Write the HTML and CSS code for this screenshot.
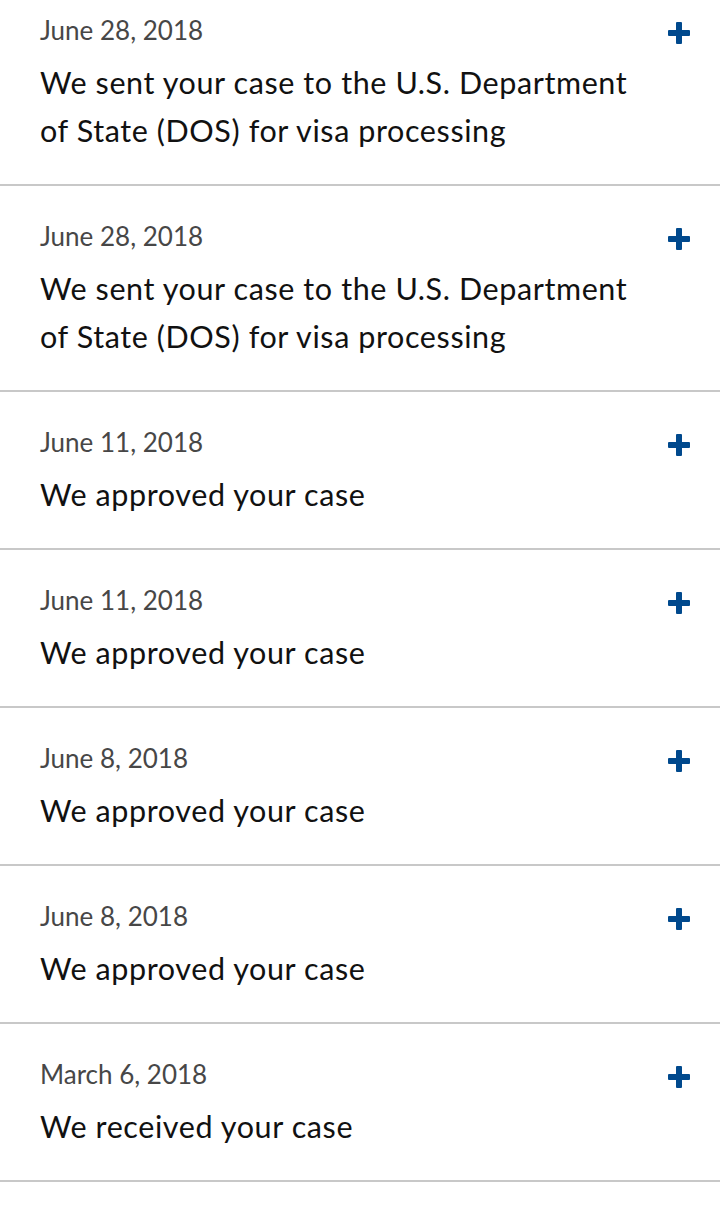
FILE: index.html
```html
<!DOCTYPE html>
<html>
<head>
<meta charset="utf-8">
<link rel="stylesheet" href="styles.css">
</head>
<body>
<div class="list">
  <div class="item">
    <div class="text">
      <div class="date">June 28, 2018</div>
      <div class="desc">We sent your case to the U.S. Department of State (DOS) for visa processing</div>
    </div>
    <span class="plus"></span>
  </div>
  <div class="item">
    <div class="text">
      <div class="date">June 28, 2018</div>
      <div class="desc">We sent your case to the U.S. Department of State (DOS) for visa processing</div>
    </div>
    <span class="plus"></span>
  </div>
  <div class="item">
    <div class="text">
      <div class="date">June 11, 2018</div>
      <div class="desc">We approved your case</div>
    </div>
    <span class="plus"></span>
  </div>
  <div class="item">
    <div class="text">
      <div class="date">June 11, 2018</div>
      <div class="desc">We approved your case</div>
    </div>
    <span class="plus"></span>
  </div>
  <div class="item">
    <div class="text">
      <div class="date">June 8, 2018</div>
      <div class="desc">We approved your case</div>
    </div>
    <span class="plus"></span>
  </div>
  <div class="item">
    <div class="text">
      <div class="date">June 8, 2018</div>
      <div class="desc">We approved your case</div>
    </div>
    <span class="plus"></span>
  </div>
  <div class="item">
    <div class="text">
      <div class="date">March 6, 2018</div>
      <div class="desc">We received your case</div>
    </div>
    <span class="plus"></span>
  </div>
</div>
</body>
</html>
```

FILE: styles.css
```css
html, body {
  margin: 0;
  padding: 0;
  background: #ffffff;
}
body {
  font-family: Lato, "Liberation Sans", sans-serif;
  overflow: hidden;
}
.list {
  margin-top: -20px;
}
.item {
  display: flex;
  align-items: flex-start;
  justify-content: space-between;
  padding: 35px 30px 30px 40px;
  border-bottom: 2px solid #c8c8c8;
}
.text {
  flex: 1;
  max-width: 600px;
}
.date {
  font-size: 26px;
  line-height: 31px;
  letter-spacing: 0;
  color: #474747;
}
.desc {
  margin-top: 12px;
  font-size: 30.5px;
  line-height: 48px;
  letter-spacing: 0.6px;
  color: #111111;
}
.plus {
  position: relative;
  width: 22px;
  height: 22px;
  margin-top: 7px;
  flex: none;
}
.plus::before,
.plus::after {
  content: "";
  position: absolute;
  background: #00498d;
  border-radius: 1px;
}
.plus::before {
  left: 0;
  top: 8px;
  width: 22px;
  height: 6px;
}
.plus::after {
  left: 8px;
  top: 0;
  width: 6px;
  height: 22px;
}
```
